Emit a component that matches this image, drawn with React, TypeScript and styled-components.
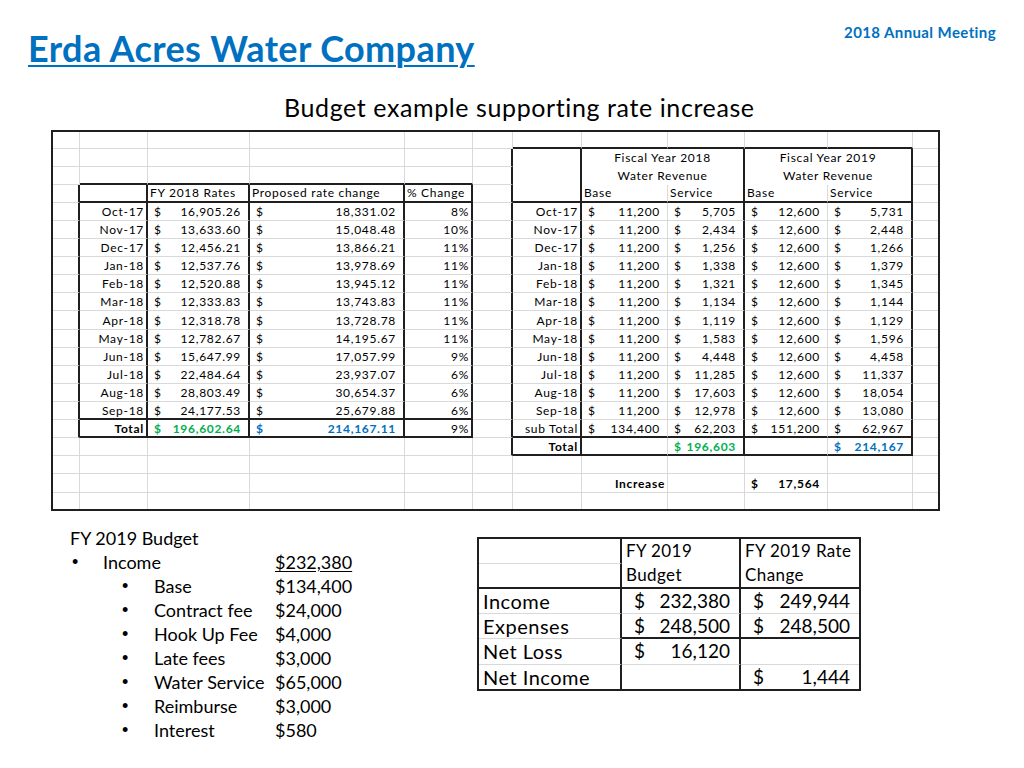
import React from 'react';
import styled, { createGlobalStyle } from 'styled-components';

const GlobalStyle = createGlobalStyle`
  html, body { margin: 0; padding: 0; background: #ffffff; }
  body { font-family: Lato, "Liberation Sans", sans-serif; color: #000; }
`;

const BLUE = '#0070c0';
const GREEN = '#00b050';
const DARK = '#1f1f1f';
const GRID = '#d9d9d9';

const Page = styled.div`
  width: 1024px;
  height: 768px;
  overflow: hidden;
  background: #fff;
`;

const Header = styled.header`
  display: flex;
  justify-content: space-between;
  align-items: flex-start;
  height: 92px;
`;

const Title = styled.h1`
  margin: 28px 0 0 28px;
  font: 700 36px/40px Lato, "Liberation Sans", sans-serif;
  letter-spacing: 0.4px;
  color: ${BLUE};
  text-decoration: underline;
  text-decoration-thickness: 2px;
  text-underline-offset: 3px;
`;

const Meeting = styled.div`
  margin: 23px 28px 0 0;
  font: 700 15px/18px Lato, "Liberation Sans", sans-serif;
  letter-spacing: 0.4px;
  color: ${BLUE};
`;

const Subtitle = styled.h2`
  margin: 0 0 0 284px;
  font: 400 25px/30px Lato, "Liberation Sans", sans-serif;
  letter-spacing: 0.6px;
  color: #000;
`;

/* ---------------- spreadsheet ---------------- */

const COLS = [27, 68, 102, 155, 68, 40, 69, 86, 77, 83, 85, 25];
const NROWS = 21;

const Sheet = styled.div`
  margin: 8px 0 0 51px;
  width: max-content;
  display: grid;
  grid-template-columns: ${COLS.map((c) => `${c}px`).join(' ')};
  grid-template-rows: 16.5px repeat(19, 18.12px) 16.2px;
  border: 2px solid ${DARK};
  font: 400 12px Lato, "Liberation Sans", sans-serif;
  letter-spacing: 0.7px;
  color: #000;
`;

type Line = 'thick' | 'light' | 'none';

const lineCss = (l: Line) =>
  l === 'thick' ? `2px solid ${DARK}` : l === 'light' ? `1px solid ${GRID}` : 'none';

const Cell = styled.div<{
  $span: number;
  $right: Line;
  $bottom: Line;
  $align: 'left' | 'right' | 'center' | 'between';
  $bold?: boolean;
  $color?: string;
  $pad: string;
}>`
  grid-column: span ${(p) => p.$span};
  box-sizing: border-box;
  border-right: ${(p) => lineCss(p.$right)};
  border-bottom: ${(p) => lineCss(p.$bottom)};
  display: flex;
  align-items: center;
  justify-content: ${(p) =>
    p.$align === 'left'
      ? 'flex-start'
      : p.$align === 'right'
      ? 'flex-end'
      : p.$align === 'center'
      ? 'center'
      : 'space-between'};
  padding: ${(p) => p.$pad};
  white-space: nowrap;
  font-weight: ${(p) => (p.$bold ? 700 : 400)};
  color: ${(p) => p.$color || '#000'};
`;

type Money = { kind: 'money'; value: string; bold?: boolean; color?: string; span?: number };
type Txt = {
  kind: 'text';
  text: string;
  align: 'left' | 'right' | 'center';
  bold?: boolean;
  color?: string;
  span?: number;
};
type Empty = { kind: 'empty'; span?: number };
type Desc = Money | Txt | Empty;

const months = [
  'Oct-17', 'Nov-17', 'Dec-17', 'Jan-18', 'Feb-18', 'Mar-18',
  'Apr-18', 'May-18', 'Jun-18', 'Jul-18', 'Aug-18', 'Sep-18',
];

const leftData: [string, string, string][] = [
  ['16,905.26', '18,331.02', '8%'],
  ['13,633.60', '15,048.48', '10%'],
  ['12,456.21', '13,866.21', '11%'],
  ['12,537.76', '13,978.69', '11%'],
  ['12,520.88', '13,945.12', '11%'],
  ['12,333.83', '13,743.83', '11%'],
  ['12,318.78', '13,728.78', '11%'],
  ['12,782.67', '14,195.67', '11%'],
  ['15,647.99', '17,057.99', '9%'],
  ['22,484.64', '23,937.07', '6%'],
  ['28,803.49', '30,654.37', '6%'],
  ['24,177.53', '25,679.88', '6%'],
];

const rightData: [string, string, string, string][] = [
  ['11,200', '5,705', '12,600', '5,731'],
  ['11,200', '2,434', '12,600', '2,448'],
  ['11,200', '1,256', '12,600', '1,266'],
  ['11,200', '1,338', '12,600', '1,379'],
  ['11,200', '1,321', '12,600', '1,345'],
  ['11,200', '1,134', '12,600', '1,144'],
  ['11,200', '1,119', '12,600', '1,129'],
  ['11,200', '1,583', '12,600', '1,596'],
  ['11,200', '4,448', '12,600', '4,458'],
  ['11,200', '11,285', '12,600', '11,337'],
  ['11,200', '17,603', '12,600', '18,054'],
  ['11,200', '12,978', '12,600', '13,080'],
];

function buildGrid(): (Desc | null)[][] {
  const g: (Desc | null)[][] = Array.from({ length: NROWS }, () =>
    Array.from({ length: COLS.length }, () => ({ kind: 'empty' } as Desc))
  );
  const t = (text: string, align: Txt['align'], extra: Partial<Txt> = {}): Txt => ({
    kind: 'text',
    text,
    align,
    ...extra,
  });
  const m = (value: string, extra: Partial<Money> = {}): Money => ({ kind: 'money', value, ...extra });

  // left table
  g[3][2] = t('FY 2018 Rates', 'left');
  g[3][3] = t('Proposed rate change', 'left');
  g[3][4] = t('% Change', 'left');
  months.forEach((mo, i) => {
    const r = 4 + i;
    g[r][1] = t(mo, 'right');
    g[r][2] = m(leftData[i][0]);
    g[r][3] = m(leftData[i][1]);
    g[r][4] = t(leftData[i][2], 'right');
  });
  g[16][1] = t('Total', 'right', { bold: true });
  g[16][2] = m('196,602.64', { bold: true, color: GREEN });
  g[16][3] = m('214,167.11', { bold: true, color: BLUE });
  g[16][4] = t('9%', 'right');

  // right table
  g[1][7] = t('Fiscal Year 2018', 'center', { span: 2 });
  g[1][8] = null;
  g[1][9] = t('Fiscal Year 2019', 'center', { span: 2 });
  g[1][10] = null;
  g[2][7] = t('Water Revenue', 'center', { span: 2 });
  g[2][8] = null;
  g[2][9] = t('Water Revenue', 'center', { span: 2 });
  g[2][10] = null;
  g[3][7] = t('Base', 'left');
  g[3][8] = t('Service', 'left');
  g[3][9] = t('Base', 'left');
  g[3][10] = t('Service', 'left');
  months.forEach((mo, i) => {
    const r = 4 + i;
    g[r][6] = t(mo, 'right');
    g[r][7] = m(rightData[i][0]);
    g[r][8] = m(rightData[i][1]);
    g[r][9] = m(rightData[i][2]);
    g[r][10] = m(rightData[i][3]);
  });
  g[16][6] = t('sub Total', 'right');
  g[16][7] = m('134,400');
  g[16][8] = m('62,203');
  g[16][9] = m('151,200');
  g[16][10] = m('62,967');
  g[17][6] = t('Total', 'right', { bold: true });
  g[17][8] = m('196,603', { bold: true, color: GREEN });
  g[17][10] = m('214,167', { bold: true, color: BLUE });
  g[19][7] = t('Increase', 'right', { bold: true });
  g[19][9] = m('17,564', { bold: true });
  return g;
}

// vertical boundary b lies between column b-1 and b
const vThick = (b: number, r: number) =>
  ([1, 2, 3, 4, 5].includes(b) && r >= 3 && r <= 16) ||
  ([6, 7, 9, 11].includes(b) && r >= 1 && r <= 17);

// horizontal boundary b lies between row b-1 and b
const hThick = (b: number, c: number) =>
  ([3, 4, 16, 17].includes(b) && c >= 1 && c <= 4) ||
  ([1, 4, 17, 18].includes(b) && c >= 6 && c <= 10);

const noLightBottom = (r: number, c: number) => (r === 1 || r === 2) && c >= 6 && c <= 10;

const Cur = styled.span``;
const Num = styled.span``;

function Spreadsheet() {
  const g = buildGrid();
  const out: React.ReactNode[] = [];
  for (let r = 0; r < NROWS; r++) {
    for (let c = 0; c < COLS.length; c++) {
      const d = g[r][c];
      if (d === null) continue;
      const span = d.span ?? 1;
      const rb = c + span;
      const bb = r + 1;
      const right: Line = rb >= COLS.length ? 'none' : vThick(rb, r) ? 'thick' : 'light';
      const cols = Array.from({ length: span }, (_, k) => c + k);
      const bottom: Line =
        bb >= NROWS
          ? 'none'
          : cols.some((cc) => hThick(bb, cc))
          ? 'thick'
          : cols.every((cc) => noLightBottom(r, cc))
          ? 'none'
          : 'light';
      const key = `${r}-${c}`;
      if (d.kind === 'money') {
        out.push(
          <Cell
            key={key}
            $span={span}
            $right={right}
            $bottom={bottom}
            $align="between"
            $bold={d.bold}
            $color={d.color}
            $pad="0 7px 0 6px"
          >
            <Cur>$</Cur>
            <Num>{d.value}</Num>
          </Cell>
        );
      } else if (d.kind === 'text') {
        out.push(
          <Cell
            key={key}
            $span={span}
            $right={right}
            $bottom={bottom}
            $align={d.align}
            $bold={d.bold}
            $color={d.color}
            $pad={d.align === 'right' ? '0 2px 0 0' : d.align === 'left' ? '0 0 0 2px' : '0'}
          >
            {d.text}
          </Cell>
        );
      } else {
        out.push(
          <Cell key={key} $span={span} $right={right} $bottom={bottom} $align="left" $pad="0" />
        );
      }
    }
  }
  return <Sheet>{out}</Sheet>;
}

/* ---------------- bottom section ---------------- */

const Bottom = styled.section`
  display: flex;
  align-items: flex-start;
  margin-top: 15px;
  padding-left: 70px;
`;

const BudgetList = styled.div`
  width: 407px;
  font: 400 18px/24px Lato, "Liberation Sans", sans-serif;
  color: #000;
`;

const ListTitle = styled.div``;

const ListRow = styled.div`
  display: grid;
  grid-template-columns: 205px auto;
`;

const ListLabel = styled.div<{ $level: number }>`
  display: flex;
  padding-left: ${(p) => (p.$level === 1 ? 2 : 52)}px;
`;

const Bullet = styled.span<{ $level: number }>`
  width: ${(p) => (p.$level === 1 ? 31 : 32)}px;
  font-family: "Liberation Sans", Arial, sans-serif;
`;

const ListValue = styled.span<{ $underline?: boolean }>`
  text-decoration: ${(p) => (p.$underline ? 'underline' : 'none')};
  text-underline-offset: 2px;
`;

const budgetItems: { label: string; value: string; level: number; underline?: boolean }[] = [
  { label: 'Income', value: '$232,380', level: 1, underline: true },
  { label: 'Base', value: '$134,400', level: 2 },
  { label: 'Contract fee', value: '$24,000', level: 2 },
  { label: 'Hook Up Fee', value: '$4,000', level: 2 },
  { label: 'Late fees', value: '$3,000', level: 2 },
  { label: 'Water Service', value: '$65,000', level: 2 },
  { label: 'Reimburse', value: '$3,000', level: 2 },
  { label: 'Interest', value: '$580', level: 2 },
];

const SummaryTable = styled.div`
  margin-top: 11px;
  display: grid;
  grid-template-columns: 143px 119px 118px;
  grid-template-rows: 25px 25px 25px 25.5px 25.5px 24px;
  border: 2px solid ${DARK};
  font: 400 19px/22px Lato, "Liberation Sans", sans-serif;
  color: #000;
`;

const SCell = styled.div<{
  $right: Line;
  $bottom: Line;
  $rows?: number;
  $money?: boolean;
  $head?: boolean;
  $label?: boolean;
}>`
  box-sizing: border-box;
  grid-row: span ${(p) => p.$rows ?? 1};
  border-right: ${(p) => lineCss(p.$right)};
  border-bottom: ${(p) => lineCss(p.$bottom)};
  display: flex;
  flex-direction: ${(p) => (p.$head ? 'column' : 'row')};
  justify-content: ${(p) => (p.$money ? 'space-between' : 'flex-start')};
  align-items: flex-start;
  padding: ${(p) => (p.$money ? '1px 9px 0 12px' : p.$head ? '0 0 0 4px' : '1px 0 0 4px')};
  ${(p) => (p.$head ? 'font-size: 17px; line-height: 24px; letter-spacing: 0.4px;' : '')}
  ${(p) => (p.$label ? 'font-size: 20px; letter-spacing: 0.5px;' : '')}
  white-space: nowrap;
`;

function Summary() {
  return (
    <SummaryTable>
      <SCell $right="thick" $bottom="light" />
      <SCell $right="thick" $bottom="thick" $rows={2} $head>
        <span>FY 2019</span>
        <span>Budget</span>
      </SCell>
      <SCell $right="none" $bottom="thick" $rows={2} $head>
        <span>FY 2019 Rate</span>
        <span>Change</span>
      </SCell>
      <SCell $right="thick" $bottom="thick" />

      <SCell $right="thick" $bottom="light" $label>Income</SCell>
      <SCell $right="thick" $bottom="light" $money>
        <span>$</span>
        <span>232,380</span>
      </SCell>
      <SCell $right="none" $bottom="light" $money>
        <span>$</span>
        <span>249,944</span>
      </SCell>

      <SCell $right="thick" $bottom="light" $label>Expenses</SCell>
      <SCell $right="thick" $bottom="thick" $money>
        <span>$</span>
        <span>248,500</span>
      </SCell>
      <SCell $right="none" $bottom="thick" $money>
        <span>$</span>
        <span>248,500</span>
      </SCell>

      <SCell $right="thick" $bottom="light" $label>Net Loss</SCell>
      <SCell $right="thick" $bottom="light" $money>
        <span>$</span>
        <span>16,120</span>
      </SCell>
      <SCell $right="none" $bottom="light" />

      <SCell $right="thick" $bottom="none" $label>Net Income</SCell>
      <SCell $right="thick" $bottom="none" />
      <SCell $right="none" $bottom="none" $money>
        <span>$</span>
        <span>1,444</span>
      </SCell>
    </SummaryTable>
  );
}

export default function App() {
  return (
    <Page>
      <GlobalStyle />
      <Header>
        <Title>Erda Acres Water Company</Title>
        <Meeting>2018 Annual Meeting</Meeting>
      </Header>
      <Subtitle>Budget example supporting rate increase</Subtitle>
      <Spreadsheet />
      <Bottom>
        <BudgetList>
          <ListTitle>FY 2019 Budget</ListTitle>
          {budgetItems.map((it) => (
            <ListRow key={it.label}>
              <ListLabel $level={it.level}>
                <Bullet $level={it.level}>•</Bullet>
                <span>{it.label}</span>
              </ListLabel>
              <ListValue $underline={it.underline}>{it.value}</ListValue>
            </ListRow>
          ))}
        </BudgetList>
        <Summary />
      </Bottom>
    </Page>
  );
}
